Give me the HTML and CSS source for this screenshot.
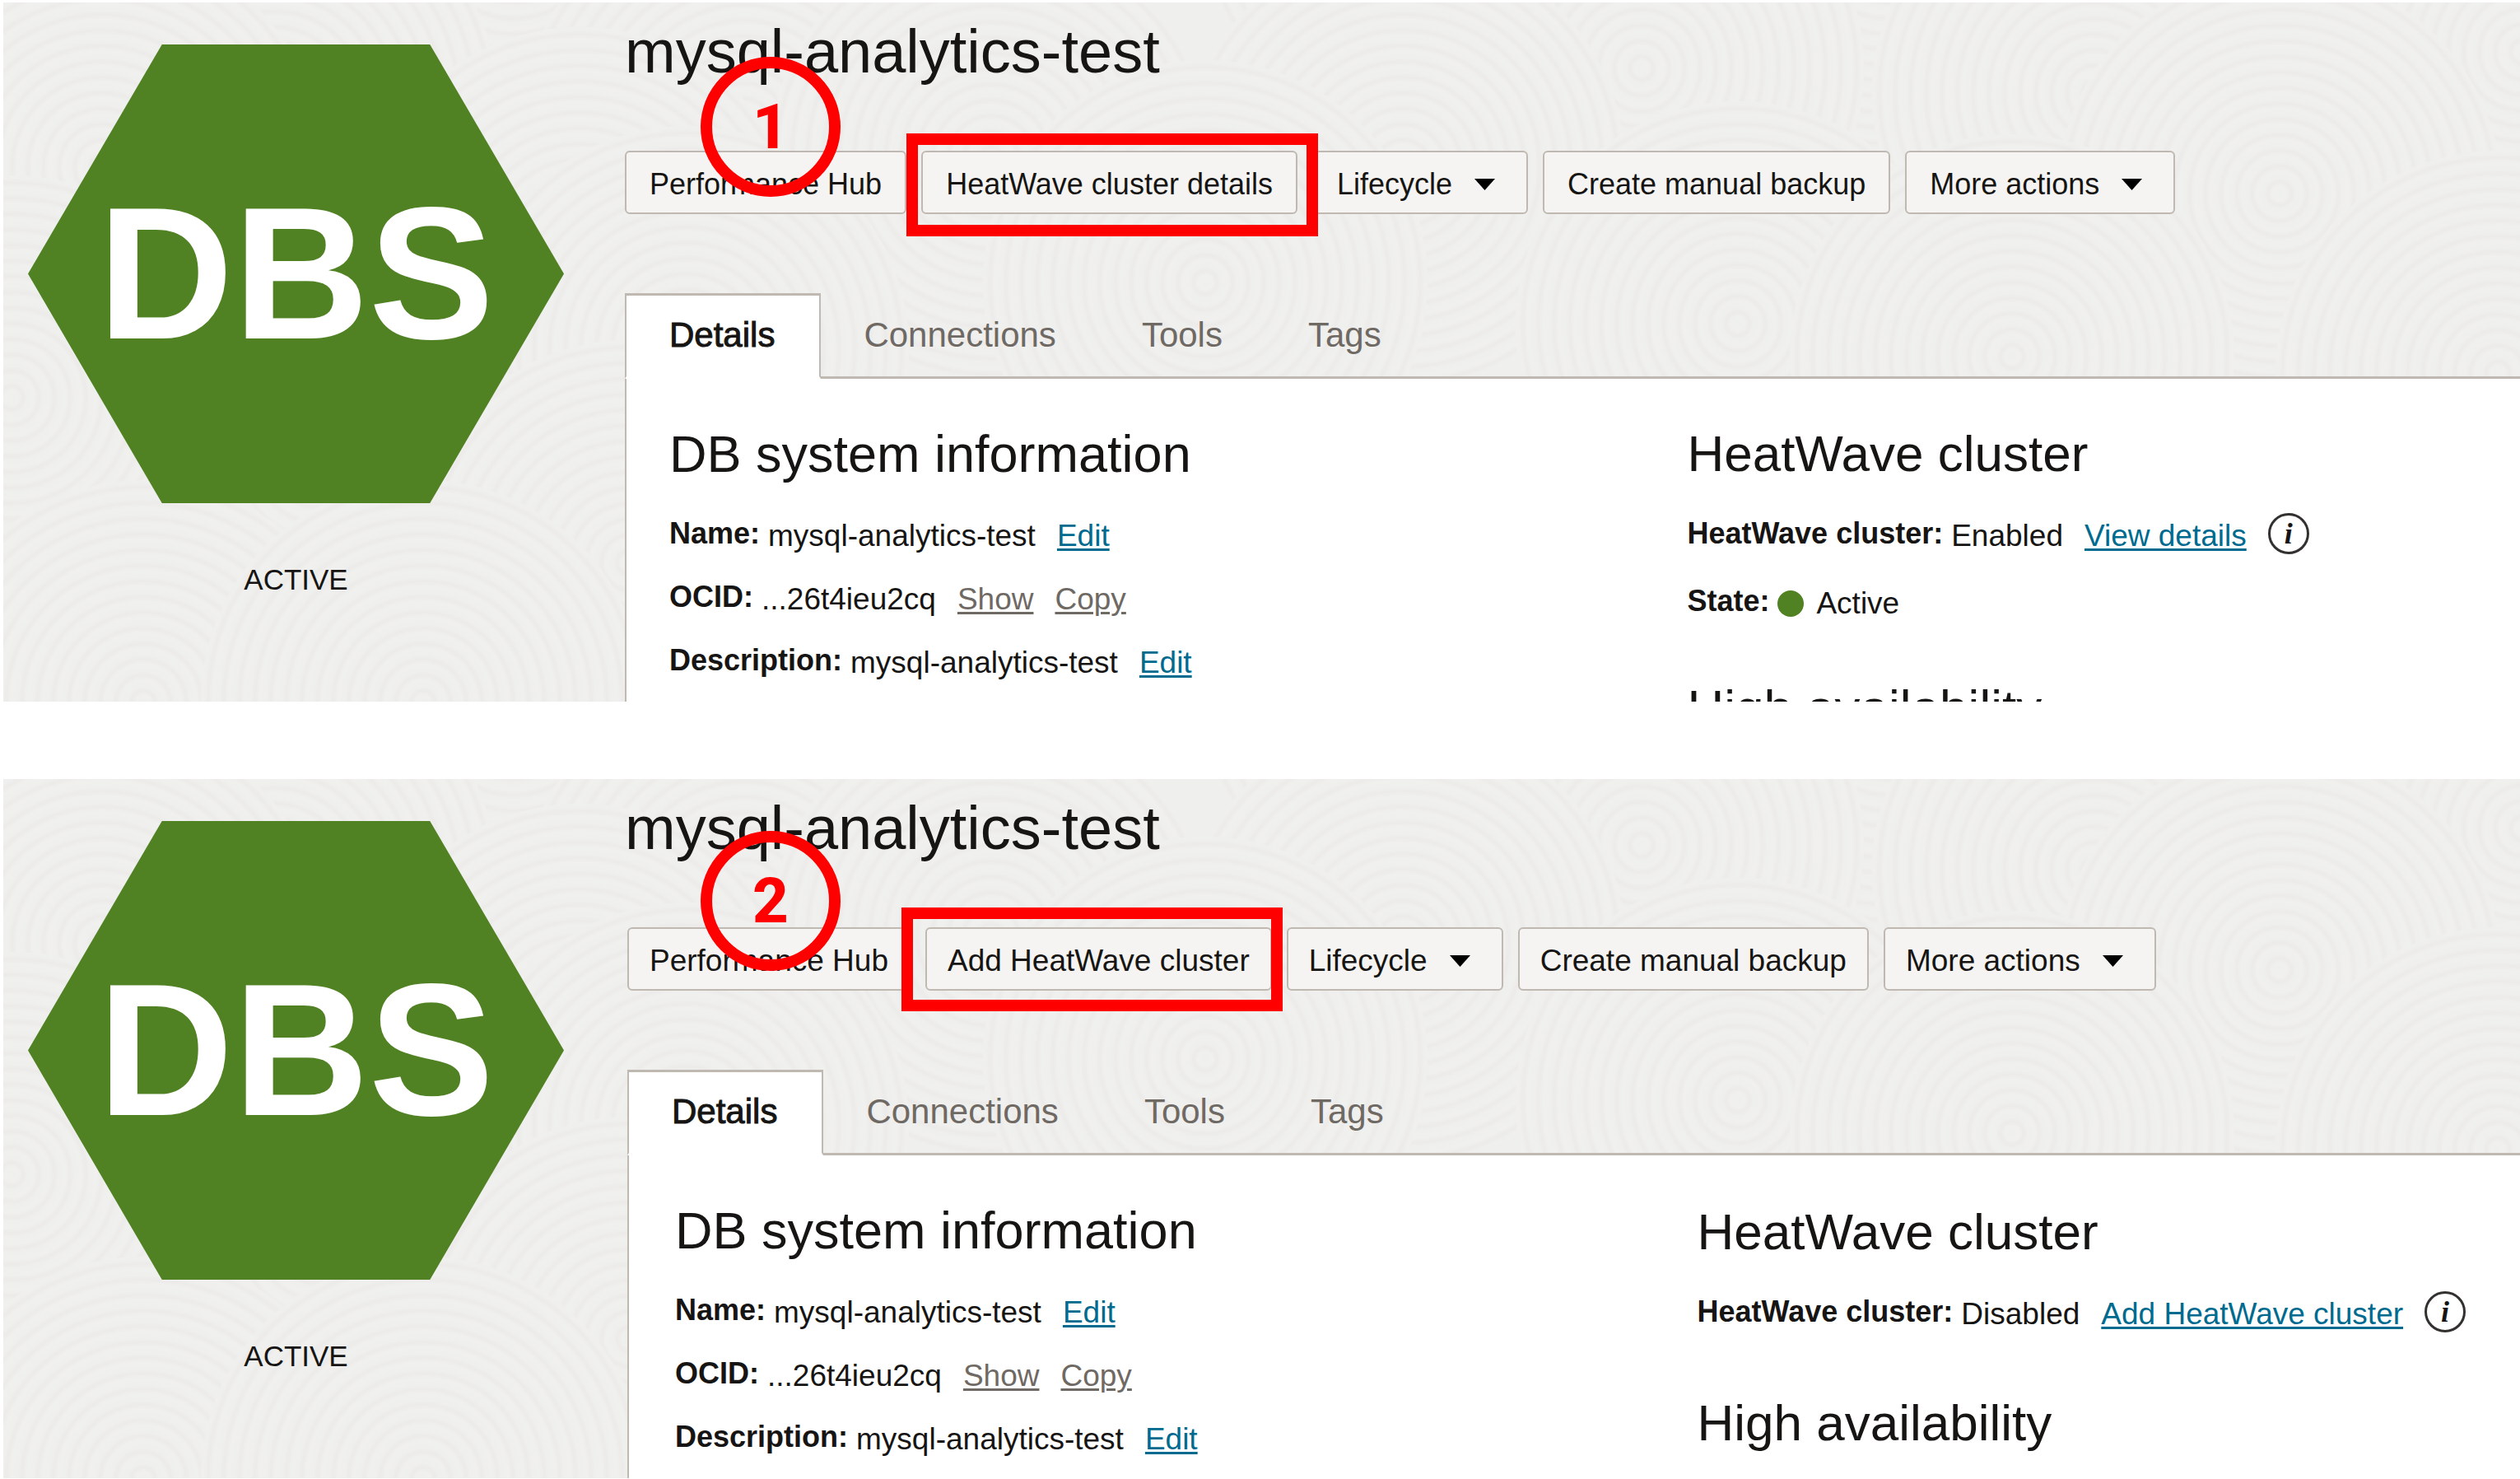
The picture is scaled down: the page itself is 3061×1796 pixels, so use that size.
FILE: index.html
```html
<!DOCTYPE html>
<html lang="en">
<head>
<meta charset="utf-8">
<title>mysql-analytics-test</title>
<meta name="viewport" content="width=device-width, initial-scale=1">
<link rel="stylesheet" href="styles.css">
</head>
<body>
<svg class="defs" aria-hidden="true">
  <defs>
    <radialGradient id="rings" gradientUnits="userSpaceOnUse" cx="0" cy="0" r="19" spreadMethod="repeat">
      <stop offset="0" stop-color="#efefed"/>
      <stop offset="0.45" stop-color="#f0f0ee"/>
      <stop offset="0.75" stop-color="#ecebea"/>
      <stop offset="1" stop-color="#efefed"/>
    </radialGradient>
    <circle id="disc" r="270" fill="url(#rings)"/>
    <g id="texture">
      <use href="#disc" x="40" y="-60"/>
      <use href="#disc" x="620" y="-90"/>
      <use href="#disc" x="1130" y="-40"/>
      <use href="#disc" x="1720" y="-110"/>
      <use href="#disc" x="2290" y="-90"/>
      <use href="#disc" x="2850" y="-100"/>
      <use href="#disc" x="330" y="120"/>
      <use href="#disc" x="900" y="150"/>
      <use href="#disc" x="1990" y="80"/>
      <use href="#disc" x="2540" y="110"/>
      <use href="#disc" x="3060" y="60"/>
      <use href="#disc" x="120" y="200"/>
      <use href="#disc" x="700" y="300"/>
      <use href="#disc" x="1200" y="190"/>
      <use href="#disc" x="1700" y="200"/>
      <use href="#disc" x="2765" y="232"/>
      <use href="#disc" x="830" y="420"/>
      <use href="#disc" x="1460" y="340"/>
      <use href="#disc" x="2107" y="390"/>
      <use href="#disc" x="2440" y="430"/>
      <use href="#disc" x="3030" y="450"/>
      <use href="#disc" x="380" y="560"/>
      <use href="#disc" x="10" y="480"/>
      <use href="#disc" x="760" y="680"/>
      <use href="#disc" x="170" y="850"/>
      <use href="#disc" x="510" y="850"/>
    </g>
  </defs>
</svg>

<main class="page">
  <section class="panel">
    <svg class="panel-texture" aria-hidden="true"><use href="#texture"/></svg>
    <aside class="status">
      <div class="hexagon">DBS</div>
      <p class="status-text">ACTIVE</p>
    </aside>
    <div class="main">
      <header class="heading">
        <h1>mysql-analytics-test</h1>
        <span class="marker">1</span>
      </header>
      <div class="toolbar">
        <button type="button" class="btn">Performance Hub</button>
        <div class="target">
          <button type="button" class="btn">HeatWave cluster details</button>
          <span class="highlight"></span>
        </div>
        <button type="button" class="btn btn-menu">Lifecycle <svg class="caret" viewBox="0 0 25 14" aria-hidden="true"><path d="M0 0H25L12.5 14Z"/></svg></button>
        <button type="button" class="btn">Create manual backup</button>
        <button type="button" class="btn btn-menu">More actions <svg class="caret" viewBox="0 0 25 14" aria-hidden="true"><path d="M0 0H25L12.5 14Z"/></svg></button>
      </div>
      <nav class="tabs">
        <a class="tab tab-active" href="#details">Details</a>
        <a class="tab" href="#connections">Connections</a>
        <a class="tab" href="#tools">Tools</a>
        <a class="tab" href="#tags">Tags</a>
      </nav>
      <div class="content">
        <div class="column">
          <h2>DB system information</h2>
          <dl class="facts">
            <div class="fact"><dt>Name:</dt><dd>mysql-analytics-test <a class="link" href="#edit-name">Edit</a></dd></div>
            <div class="fact"><dt>OCID:</dt><dd>...26t4ieu2cq <a class="link link-muted" href="#show">Show</a> <a class="link link-muted" href="#copy">Copy</a></dd></div>
            <div class="fact"><dt>Description:</dt><dd>mysql-analytics-test <a class="link" href="#edit-description">Edit</a></dd></div>
          </dl>
        </div>
        <div class="column column-side">
          <h2>HeatWave cluster</h2>
          <dl class="facts">
            <div class="fact fact-info"><dt>HeatWave cluster:</dt><dd>Enabled <a class="link" href="#view-details">View details</a> <button type="button" class="info" aria-label="About HeatWave clusters">i</button></dd></div>
            <div class="fact"><dt>State:</dt><dd><span class="dot"></span>Active</dd></div>
          </dl>
          <h2 class="next">High availability</h2>
        </div>
      </div>
    </div>
  </section>

  <section class="panel panel-disabled">
    <svg class="panel-texture" aria-hidden="true"><use href="#texture"/></svg>
    <aside class="status">
      <div class="hexagon">DBS</div>
      <p class="status-text">ACTIVE</p>
    </aside>
    <div class="main">
      <header class="heading">
        <h1>mysql-analytics-test</h1>
        <span class="marker">2</span>
      </header>
      <div class="toolbar">
        <button type="button" class="btn">Performance Hub</button>
        <div class="target">
          <button type="button" class="btn">Add HeatWave cluster</button>
          <span class="highlight"></span>
        </div>
        <button type="button" class="btn btn-menu">Lifecycle <svg class="caret" viewBox="0 0 25 14" aria-hidden="true"><path d="M0 0H25L12.5 14Z"/></svg></button>
        <button type="button" class="btn">Create manual backup</button>
        <button type="button" class="btn btn-menu">More actions <svg class="caret" viewBox="0 0 25 14" aria-hidden="true"><path d="M0 0H25L12.5 14Z"/></svg></button>
      </div>
      <nav class="tabs">
        <a class="tab tab-active" href="#details">Details</a>
        <a class="tab" href="#connections">Connections</a>
        <a class="tab" href="#tools">Tools</a>
        <a class="tab" href="#tags">Tags</a>
      </nav>
      <div class="content">
        <div class="column">
          <h2>DB system information</h2>
          <dl class="facts">
            <div class="fact"><dt>Name:</dt><dd>mysql-analytics-test <a class="link" href="#edit-name">Edit</a></dd></div>
            <div class="fact"><dt>OCID:</dt><dd>...26t4ieu2cq <a class="link link-muted" href="#show">Show</a> <a class="link link-muted" href="#copy">Copy</a></dd></div>
            <div class="fact"><dt>Description:</dt><dd>mysql-analytics-test <a class="link" href="#edit-description">Edit</a></dd></div>
          </dl>
        </div>
        <div class="column column-side">
          <h2>HeatWave cluster</h2>
          <dl class="facts">
            <div class="fact fact-info"><dt>HeatWave cluster:</dt><dd>Disabled <a class="link" href="#add-cluster">Add HeatWave cluster</a> <button type="button" class="info" aria-label="About HeatWave clusters">i</button></dd></div>
          </dl>
          <h2 class="next">High availability</h2>
        </div>
      </div>
    </div>
  </section>
</main>
</body>
</html>
```

FILE: styles.css
```css
* {
  box-sizing: border-box;
}

body {
  margin: 0;
  background: #fff;
  color: #161513;
  font-family: "Liberation Sans", Arial, sans-serif;
  font-size: 36px;
}

h1,
h2,
p,
dl,
dd {
  margin: 0;
  font-weight: 400;
}

.defs {
  position: absolute;
  width: 0;
  height: 0;
}

.page {
  display: grid;
  grid-template-rows: 1fr 1fr;
  gap: 94px;
  height: 100vh;
  padding: 3px 0 1px 4px;
}

/* One console view; whatever does not fit its row is cut off */
.panel {
  --shift: 0px;
  --pad: 52px;
  --column-gap: 0px;
  --side-top: 0px;
  --btn-size: 36px;
  --btn-pad: 28px;
  --marker-top: 66px;
  --ring: -21px -25px -27px -18px;
  position: relative;
  display: grid;
  grid-template-columns: 755px 1fr;
  min-height: 0;
  overflow: hidden;
  background: #efefed;
}

.panel-disabled {
  --shift: 3px;
  --pad: 56px;
  --column-gap: 20px;
  --side-top: 2px;
  --btn-size: 37px;
  --btn-pad: 25px;
  --marker-top: 63px;
  --ring: -24px -13px -25px -29px;
}

.panel-texture {
  position: absolute;
  inset: 0;
  width: 100%;
  height: 100%;
}

.status,
.main {
  position: relative;
}

.status {
  padding: 51px 74px 0 30px;
  text-align: center;
}

.hexagon {
  height: 557px;
  background: #508223;
  clip-path: polygon(25% 0, 75% 0, 100% 50%, 75% 100%, 25% 100%, 0 50%);
  color: #fff;
  font-size: 228px;
  font-weight: 700;
  line-height: 557px;
}

.status-text {
  margin-top: 72px;
  font-size: 35px;
  line-height: 42px;
}

.main {
  display: flex;
  flex-direction: column;
}

.heading {
  padding-top: 18px;
}

h1 {
  font-size: 74px;
  line-height: 84px;
}

.marker {
  position: absolute;
  z-index: 2;
  top: var(--marker-top);
  left: 92px;
  display: flex;
  align-items: center;
  justify-content: center;
  width: 170px;
  height: 170px;
  border: 14px solid #f00;
  border-radius: 50%;
  color: #f00;
  font-family: Roboto, sans-serif;
  font-size: 76px;
  font-weight: 800;
  line-height: 1;
}

.toolbar {
  display: flex;
  gap: 18px;
  margin: 78px 0 0 var(--shift);
}

.btn {
  height: 77px;
  padding: 5px var(--btn-pad) 0;
  border: 2px solid #bfb9b2;
  border-radius: 6px;
  background: #f5f4f2;
  color: inherit;
  font: inherit;
  font-size: var(--btn-size);
  white-space: nowrap;
}

.btn-menu {
  display: flex;
  align-items: center;
  gap: 27px;
  padding-right: 38px;
}

.caret {
  width: 25px;
  height: 14px;
}

.target {
  position: relative;
  z-index: 1;
}

.highlight {
  position: absolute;
  inset: var(--ring);
  border: 14px solid #f00;
  pointer-events: none;
}

.tabs {
  position: relative;
  display: flex;
  margin: 96px 0 -3px var(--shift);
}

.tab {
  padding: 27px 52px 29px;
  border-top: 3px solid transparent;
  border-bottom: 3px solid transparent;
  color: #6f6964;
  font-size: 42px;
  line-height: 42px;
  text-decoration: none;
}

.tab-active {
  padding-right: 54px;
  border-right: 2px solid #bfb9b2;
  border-left: 2px solid #bfb9b2;
  border-top-color: #bfb9b2;
  border-bottom-color: #fff;
  background: #fff;
  color: #161513;
  -webkit-text-stroke: 1px #161513;
}

.content {
  display: grid;
  flex: 1;
  grid-template-columns: 11fr 9fr;
  column-gap: var(--column-gap);
  margin-left: var(--shift);
  padding: 55px 0 0 var(--pad);
  border-top: 3px solid #bfb9b2;
  border-left: 2px solid #bfb9b2;
  background: #fff;
}

.column-side {
  padding-top: var(--side-top);
}

h2 {
  font-size: 63px;
  line-height: 72px;
  white-space: nowrap;
}

.column-side h2 {
  font-size: 62px;
}

.facts {
  margin-top: 25px;
}

.fact {
  display: flex;
  gap: 10px;
  white-space: nowrap;
}

.fact-info {
  height: 82px;
}

dt {
  font-weight: 700;
  line-height: 72px;
}

dd {
  display: flex;
  align-items: center;
  gap: 26px;
  height: 77px;
  font-size: 37px;
  line-height: 77px;
}

.link {
  color: #006b8f;
  text-decoration: underline;
  text-decoration-thickness: 3px;
  text-underline-offset: 3px;
}

.link-muted {
  color: #6f6964;
}

.info {
  width: 50px;
  height: 50px;
  margin-bottom: 6px;
  padding: 0;
  border: 3px solid #33312f;
  border-radius: 50%;
  background: transparent;
  color: #161513;
  font: italic 700 36px/42px "Liberation Serif", serif;
}

.dot {
  width: 32px;
  height: 32px;
  margin-right: -11px;
  border-radius: 50%;
  background: #508223;
}

.next {
  margin-top: 53px;
}
```
